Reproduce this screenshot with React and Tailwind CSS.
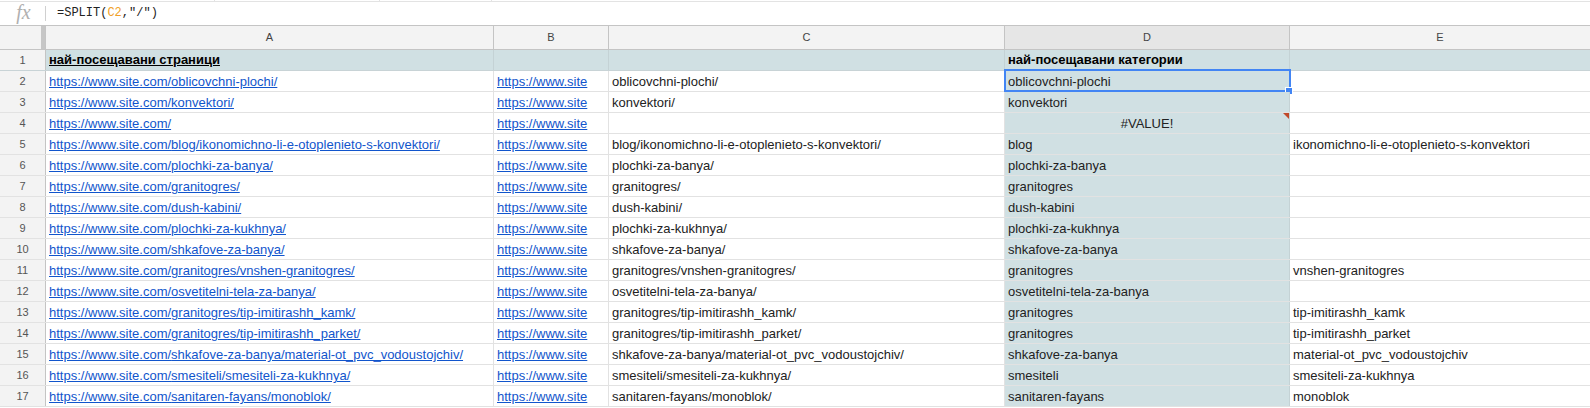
import React from "react";

const paths = [
  "oblicovchni-plochi/",
  "konvektori/",
  "",
  "blog/ikonomichno-li-e-otoplenieto-s-konvektori/",
  "plochki-za-banya/",
  "granitogres/",
  "dush-kabini/",
  "plochki-za-kukhnya/",
  "shkafove-za-banya/",
  "granitogres/vnshen-granitogres/",
  "osvetitelni-tela-za-banya/",
  "granitogres/tip-imitirashh_kamk/",
  "granitogres/tip-imitirashh_parket/",
  "shkafove-za-banya/material-ot_pvc_vodoustojchiv/",
  "smesiteli/smesiteli-za-kukhnya/",
  "sanitaren-fayans/monoblok/",
];

const font = { fontFamily: '"Liberation Sans", Arial, sans-serif' };

function RowHead({ n }) {
  return (
    <div className="w-[46px] shrink-0 h-full bg-[#f3f3f3] border-r border-[#c4c4c4] flex items-center justify-center text-[11px] text-[#555]">
      {n}
    </div>
  );
}

export default function App() {
  return (
    <div className="w-[1590px] h-[408px] overflow-hidden bg-white text-[13px] text-[#222]" style={font}>
      {/* faint top strip */}
      <div className="flex h-[2px] border-b border-[#e3e3e3]">
        <div className="w-[215px] border-r border-[#e3e3e3]" />
        <div className="w-[165px] border-r border-[#e3e3e3]" />
        <div className="w-[112px] border-r border-[#e3e3e3]" />
      </div>
      {/* formula bar */}
      <div className="flex items-center h-[24px] border-b border-[#c4c4c4] bg-white">
        <div className="w-[45px] flex items-center justify-center">
          <span className="text-[20px] italic text-[#b0b0b0] leading-none -mt-[3px] ml-[2px]" style={{ fontFamily: '"Liberation Serif", "Times New Roman", serif' }}>
            fx
          </span>
        </div>
        <div className="w-px h-[15px] bg-[#d0d0d0]" />
        <div className="pl-[11px] text-[12px] text-[#222] -mt-[2px]" style={{ fontFamily: '"Liberation Mono", "Courier New", monospace' }}>
          =SPLIT(<span className="text-[#f09f28]">C2</span>,"/")
        </div>
      </div>
      {/* column header */}
      <div className="flex h-[24px] border-b border-[#c4c4c4] bg-[#f3f3f3] text-[11px] text-[#444]">
        <div className="w-[46px] shrink-0 flex border-r border-[#c4c4c4]">
          <div className="w-[41px]" />
          <div className="w-[4px] bg-[#c6c6c6]" />
        </div>
        <div className="w-[448px] shrink-0 border-r border-[#c4c4c4] flex items-center justify-center">A</div>
        <div className="w-[115px] shrink-0 border-r border-[#c4c4c4] flex items-center justify-center">B</div>
        <div className="w-[396px] shrink-0 border-r border-[#c4c4c4] flex items-center justify-center">C</div>
        <div className="w-[285px] shrink-0 border-r border-[#c4c4c4] flex items-center justify-center bg-[#e6e6e6]">D</div>
        <div className="flex-1 flex items-center justify-center">E</div>
      </div>
      {/* row 1 */}
      <div className="flex h-[21px] border-b border-[#c8d3d6] bg-[#d0e0e3]">
        <RowHead n={1} />
        <div className="w-[448px] shrink-0 border-r border-[#c4d2d5] flex items-end pl-[3px] leading-[15px] pb-[3px] font-bold underline text-black">
          най-посещавани страници
        </div>
        <div className="w-[115px] shrink-0 border-r border-[#c4d2d5]" />
        <div className="w-[396px] shrink-0 border-r border-[#c4d2d5]" />
        <div className="w-[285px] shrink-0 border-r border-[#c4d2d5] flex items-end pl-[3px] leading-[15px] pb-[3px] font-bold text-black">
          най-посещавани категории
        </div>
        <div className="flex-1" />
      </div>
      {paths.map((p, i) => {
        const n = i + 2;
        const segs = p.split("/").filter(Boolean);
        const d = p === "" ? "#VALUE!" : segs[0];
        const e = segs[1] || "";
        const sel = n === 2;
        const err = n === 4;
        return (
          <div key={n} className="flex h-[21px] border-b border-[#e2e2e2]">
            <RowHead n={n} />
            <div className="w-[448px] shrink-0 border-r border-[#e2e2e2] flex items-end pl-[3px] leading-[15px] pb-[2px]">
              <span className="text-[#1155cc] underline whitespace-nowrap">https://www.site.com/{p}</span>
            </div>
            <div className="w-[115px] shrink-0 border-r border-[#e2e2e2] flex items-end pl-[3px] leading-[15px] pb-[2px]">
              <span className="text-[#1155cc] underline whitespace-nowrap">https://www.site</span>
            </div>
            <div className="w-[396px] shrink-0 border-r border-[#e2e2e2] flex items-end pl-[3px] leading-[15px] pb-[2px] whitespace-nowrap">
              {p}
            </div>
            <div className={`relative w-[285px] shrink-0 border-r border-[#c4d2d5] bg-[#d0e0e3] flex items-end leading-[15px] pb-[2px] whitespace-nowrap ${err ? "justify-center" : "pl-[3px]"}`}>
              {d}
              {sel && (
                <>
                  <div className="absolute -left-px -top-[2px] -right-[2px] -bottom-px border-2 border-[#4285f4] pointer-events-none" />
                  <div className="absolute -right-[4px] -bottom-[4px] w-[6px] h-[6px] bg-[#4285f4] border border-white box-content" />
                </>
              )}
              {err && (
                <div className="absolute right-0 top-0 w-0 h-0 border-t-[6px] border-l-[6px] border-t-[#c0492a] border-l-transparent" />
              )}
            </div>
            <div className="flex-1 flex items-end pl-[3px] leading-[15px] pb-[2px] whitespace-nowrap">{e}</div>
          </div>
        );
      })}
    </div>
  );
}
